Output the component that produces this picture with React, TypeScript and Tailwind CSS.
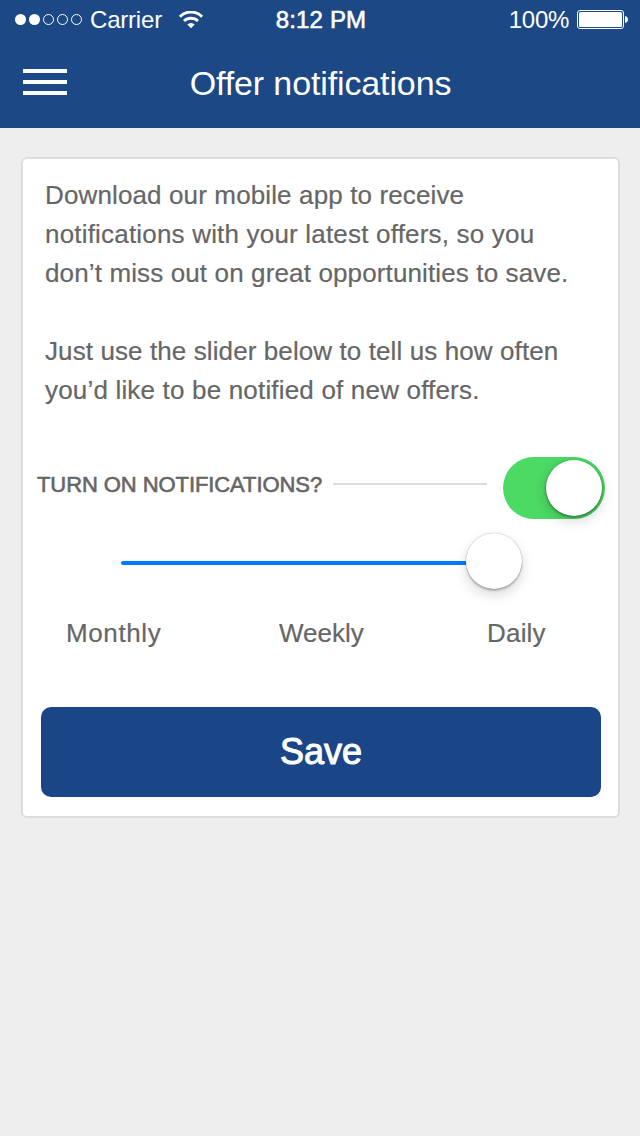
import type { ReactNode } from "react";

function SignalDots() {
  return (
    <svg width="68" height="12" viewBox="0 0 68 12" fill="none">
      <circle cx="5.5" cy="5.5" r="5.5" fill="#fff" />
      <circle cx="19.5" cy="5.5" r="5.5" fill="#fff" />
      <circle cx="33.5" cy="5.5" r="5" stroke="#fff" />
      <circle cx="47.5" cy="5.5" r="5" stroke="#fff" />
      <circle cx="61.5" cy="5.5" r="5" stroke="#fff" />
    </svg>
  );
}

function WifiIcon() {
  return (
    <svg width="26" height="18" viewBox="0 0 26 18" fill="none" stroke="#fff">
      <path d="M1.900 5.700a15.600 15.600 0 0 1 22.200 0" strokeWidth="3" />
      <path d="M6 10.100a10 10 0 0 1 14 0" strokeWidth="2.800" />
      <path d="M13 17.200l-3.700-3.600a5.300 5.300 0 0 1 7.400 0z" fill="#fff" stroke="none" />
    </svg>
  );
}

function BatteryIcon() {
  return (
    <svg width="51" height="19" viewBox="0 0 51 19" fill="none">
      <rect x="0.5" y="0.5" width="46" height="18" rx="2.5" stroke="#fff" />
      <rect x="2" y="2" width="43" height="15" rx="1.5" fill="#fff" />
      <path d="M48 6c2 .3 3 1.700 3 3.500s-1 3.200-3 3.500z" fill="#fff" />
    </svg>
  );
}

function Line({ children, className }: { children: ReactNode; className: string }) {
  return <span className={`block whitespace-nowrap ${className}`}>{children}</span>;
}

export default function App() {
  return (
    <div className="flex h-[1136px] w-[640px] flex-col bg-[#eeeeee] font-['Liberation_Sans',Arial,sans-serif] text-[#666666]">
      <header className="flex h-32 flex-col bg-[#1d4886] text-white">
        <div className="grid h-10 grid-cols-3 items-center pr-3 pl-[15px] text-2xl leading-10">
          <div className="flex items-center">
            <SignalDots />
            <span className="ml-[7px] tracking-[-0.2px]">Carrier</span>
            <span className="ml-4">
              <WifiIcon />
            </span>
          </div>
          <span className="pr-px text-center tracking-[0.15px] [-webkit-text-stroke:0.6px_#fff]">8:12 PM</span>
          <div className="-mt-px flex items-center justify-end gap-2">
            <span className="tracking-[-0.3px]">100%</span>
            <BatteryIcon />
          </div>
        </div>
        <div className="grid h-[84px] grid-cols-[120px_1fr_120px] items-center">
          <button className="ml-[23px] flex w-11 flex-col gap-[7px]" aria-label="Menu">
            <span className="h-1 bg-white" />
            <span className="h-1 bg-white" />
            <span className="h-1 bg-white" />
          </button>
          <h1 className="pt-0.5 pl-px text-center text-[34px] tracking-[-0.12px] whitespace-nowrap">
            Offer notifications
          </h1>
        </div>
      </header>

      <main className="mt-[29px] ml-[21px] flex h-[661px] w-[599px] flex-col rounded-md border-2 border-[#dddddd] bg-white">
        <div className="mt-[17px] pl-[22px] text-[26px] leading-[39px] [-webkit-text-stroke:0.2px_#666666]">
          <p>
            <Line className="tracking-[0.13px]">Download our mobile app to receive</Line>
            <Line className="tracking-[0.19px]">notifications with your latest offers, so you</Line>
            <Line className="tracking-[0.13px]">don’t miss out on great opportunities to save.</Line>
          </p>
          <p className="mt-[39px]">
            <Line className="tracking-[0.1px]">Just use the slider below to tell us how often</Line>
            <Line className="tracking-[0.18px]">you’d like to be notified of new offers.</Line>
          </p>
        </div>

        <div className="mt-[46px] flex h-[64px] items-center pr-[13px] pl-[14px]">
          <h2 className="mb-2 text-[22px] tracking-[-0.08px] whitespace-nowrap [-webkit-text-stroke:0.6px_#666666]">
            TURN ON NOTIFICATIONS?
          </h2>
          <span className="mb-2 ml-auto h-0.5 w-[154px] bg-[#dddddd]" />
          <button
            role="switch"
            aria-checked="true"
            aria-label="Turn on notifications"
            className="ml-4 flex h-[62px] w-[102px] items-center justify-end rounded-full bg-[#4cd964] pr-[3px]"
          >
            <span className="size-14 rounded-full bg-white shadow-[0_1px_3px_rgba(0,0,0,0.5),0_5px_14px_rgba(0,0,0,0.16)]" />
          </button>
        </div>

        <div className="mt-[13px] ml-[98px] flex h-14 w-[401px] items-center">
          <span className="mt-1 h-1 flex-1 rounded-l-full bg-[#007aff]" />
          <span className="size-14 rounded-full bg-white shadow-[0_0_1px_rgba(0,0,0,0.45),0_2px_2px_rgba(0,0,0,0.22),0_6px_13px_rgba(0,0,0,0.15)]" />
        </div>

        <div className="mt-6 grid h-10 grid-cols-[213px_208px_auto] items-center pl-[43px] text-[26px] [-webkit-text-stroke:0.2px_#666666]">
          <span className="tracking-[0.6px]">Monthly</span>
          <span>Weekly</span>
          <span className="tracking-[0.2px]">Daily</span>
        </div>

        <button className="mt-auto mr-[17px] mb-[19px] ml-[18px] flex h-[90px] items-center justify-center rounded-[10px] bg-[#1a4688] text-[36px] leading-10 text-white [-webkit-text-stroke:1px_#fff]">
          <span>Save</span>
        </button>
      </main>
    </div>
  );
}
